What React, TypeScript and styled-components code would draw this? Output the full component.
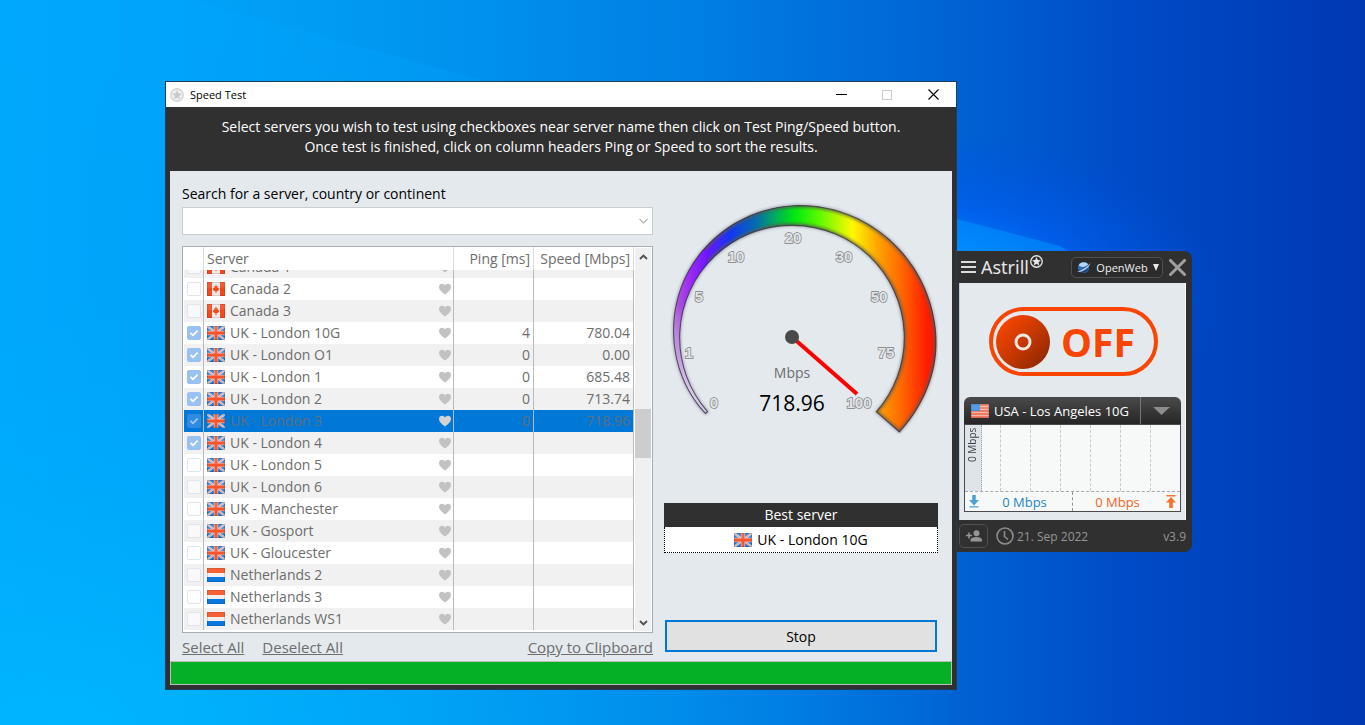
import React, { useLayoutEffect, useRef } from "react";
import styled, { createGlobalStyle, css } from "styled-components";

const GlobalStyle = createGlobalStyle`
  *, *::before, *::after { box-sizing: border-box; }
  body { margin: 0; background: #0078dc; }
  body, button, input, table { font-family: "Open Sans", "Noto Sans", sans-serif; }
  button { padding: 0; border: 0; background: none; color: inherit; cursor: pointer; }
  svg { display: block; flex: none; }
`;

/* ---------- desktop ---------- */

const Desktop = styled.main`
  position: relative;
  display: flex;
  align-items: flex-start;
  min-height: 100vh;
  padding: 81px 173px 35px 165px;
  overflow: hidden;
`;

const WallpaperArt = styled.svg`
  position: absolute;
  inset: 0;
  width: 100%;
  height: 100%;
`;

const Wallpaper = () => (
  <WallpaperArt viewBox="0 0 1365 725" preserveAspectRatio="none" aria-hidden="true">
    <defs>
      <linearGradient id="sky" x1="0" y1="0" x2="1" y2="0">
        <stop offset="0" stopColor="#00a8fc" />
        <stop offset="0.15" stopColor="#00a2f8" />
        <stop offset="0.3" stopColor="#0096f0" />
        <stop offset="0.5" stopColor="#0080e4" />
        <stop offset="0.68" stopColor="#0066d6" />
        <stop offset="0.82" stopColor="#004cc8" />
        <stop offset="1" stopColor="#0038b2" />
      </linearGradient>
      <radialGradient id="glow" gradientUnits="userSpaceOnUse" cx="0" cy="0" r="1" gradientTransform="translate(930 300) scale(290 170)">
        <stop offset="0" stopColor="#009cff" />
        <stop offset="0.3" stopColor="#0084ff" stopOpacity="0.9" />
        <stop offset="0.55" stopColor="#0060f4" stopOpacity="0.7" />
        <stop offset="1" stopColor="#0050dc" stopOpacity="0" />
      </radialGradient>
      <radialGradient id="corner" gradientUnits="userSpaceOnUse" cx="0" cy="0" r="1" gradientTransform="translate(60 725) scale(900 460)">
        <stop offset="0" stopColor="#00b8ff" stopOpacity="0.85" />
        <stop offset="1" stopColor="#00a8f8" stopOpacity="0" />
      </radialGradient>
      <linearGradient id="beam" x1="0" y1="1" x2="0.3" y2="0">
        <stop offset="0" stopColor="#00a8ff" stopOpacity="0" />
        <stop offset="1" stopColor="#00a8ff" stopOpacity="0.25" />
      </linearGradient>
    </defs>
    <rect width="1365" height="725" fill="url(#sky)" />
    <rect width="1365" height="725" fill="url(#corner)" />
    <rect width="1365" height="725" fill="url(#glow)" />
    <path d="M190 0L500 85L0 240V0Z" fill="url(#beam)" />
    <path d="M957 219L1060 246L1070 252H957Z" fill="#0098ff" opacity="0.5" />
  </WallpaperArt>
);

/* ---------- icons ---------- */

const StarBall = ({ size, ring, star, back }: { size: number; ring: string; star: string; back: string }) => (
  <svg width={size} height={size} viewBox="0 0 14 14" aria-hidden="true">
    <circle cx="7" cy="7" r="6.2" fill={back} stroke={ring} strokeWidth="1.4" />
    <path d="M7 2.2L8.4 5.3L11.8 5.6L9.2 7.9L10 11.3L7 9.5L4 11.3L4.8 7.9L2.2 5.6L5.6 5.3Z" fill={star} />
  </svg>
);

const Heart = ({ light }: { light?: boolean }) => (
  <svg width="14" height="12" viewBox="0 0 14 12" aria-hidden="true">
    <path
      d="M7 11.6C5.4 9.9 1 7.4 1 3.9C1 1.9 2.4 0.7 4 0.7C5.3 0.7 6.4 1.4 7 2.5C7.6 1.4 8.7 0.7 10 0.7C11.6 0.7 13 1.9 13 3.9C13 7.4 8.6 9.9 7 11.6Z"
      fill={light ? "#d2d2d2" : "#c2c2c2"}
    />
  </svg>
);

type Country = "ca" | "uk" | "nl" | "us";

const Flag = ({ country }: { country: Country }) => (
  <svg width="18" height="14" viewBox="0 0 18 14" aria-hidden="true">
    {country === "ca" && (
      <>
        <rect width="18" height="14" fill="#ece9e7" />
        <rect width="5" height="14" fill="#f4481f" />
        <rect x="13" width="5" height="14" fill="#f4481f" />
        <path d="M9 2.6L10 4.6L11 4.2L10.8 6L12.4 6.4L11.4 8.6L9.4 9.4V11.2H8.6V9.4L6.6 8.6L5.6 6.4L7.2 6L7 4.2L8 4.6Z" fill="#f4481f" />
      </>
    )}
    {country === "uk" && (
      <>
        <rect width="18" height="14" fill="#1878d2" />
        <path d="M0 0L18 14M18 0L0 14" stroke="#c9d3e0" strokeWidth="2.4" />
        <path d="M0 0L18 14M18 0L0 14" stroke="#f08f80" strokeWidth="0.9" />
        <path d="M9 0V14M0 7H18" stroke="#e3b9b4" strokeWidth="4.4" />
        <path d="M9 0V14M0 7H18" stroke="#f6532c" strokeWidth="2.8" />
      </>
    )}
    {country === "nl" && (
      <>
        <rect width="18" height="14" fill="#f1f0ef" />
        <rect width="18" height="5" fill="#f4501f" />
        <rect y="9" width="18" height="5" fill="#0a78de" />
      </>
    )}
    {country === "us" && (
      <>
        <rect width="18" height="14" fill="#f6b5a6" />
        <path d="M0 1H18M0 4H18M0 7H18M0 10H18M0 13H18" stroke="#ee6650" strokeWidth="1.6" />
        <rect width="9" height="7" fill="#3f93dd" />
      </>
    )}
    <rect x="0.5" y="0.5" width="17" height="13" fill="none" stroke="#000" strokeOpacity="0.12" />
    <path d="M0 0H18V5Q9 7 0 6Z" fill="#fff" opacity="0.1" />
  </svg>
);

/* ---------- speed test window ---------- */

const Window = styled.section`
  position: relative;
  flex: 1;
  min-width: 640px;
  border: 1px solid #1f3c58;
  background: #303030;
`;

const TitleBar = styled.header`
  display: flex;
  align-items: center;
  height: 25px;
  padding-left: 4px;
  background: #fff;
  color: #000;
`;

const WindowTitle = styled.h1`
  flex: 1;
  margin: 0 0 0 6px;
  font-size: 11px;
  line-height: 16px;
  font-weight: 400;
`;

const CaptionButton = styled.button`
  display: grid;
  place-items: center;
  width: 46px;
  height: 25px;
`;

const Notice = styled.p`
  height: 64px;
  margin: 0;
  padding-top: 10px;
  color: #fff;
  font-size: 14px;
  line-height: 20px;
  text-align: center;
`;

const Content = styled.div`
  display: grid;
  grid-template-columns: minmax(0, 1fr) 274px;
  column-gap: 11px;
  margin: 0 4px;
  padding: 13px 14px 4px 12px;
  background: #e4e9ee;
`;

const Column = styled.div`
  display: flex;
  flex-direction: column;
`;

const SearchLabel = styled.label`
  margin-bottom: 3px;
  font-size: 14px;
  line-height: 20px;
  color: #000;
`;

const SearchBox = styled.div`
  display: flex;
  align-items: center;
  height: 28px;
  margin-bottom: 11px;
  border: 1px solid #ccc;
  background: #fff;
`;

const SearchInput = styled.input`
  flex: 1;
  min-width: 0;
  height: 26px;
  padding: 0 4px;
  border: 0;
  outline: 0;
  background: transparent;
  font-size: 14px;
`;

const DropButton = styled.button`
  display: grid;
  place-items: center;
  width: 17px;
  height: 26px;
`;

const ListBox = styled.div`
  display: flex;
  padding: 0 1px;
  border: 1px solid #a9adb2;
  background: #fff;
`;

const ListViewport = styled.div`
  flex: 1;
  min-width: 0;
  height: 385px;
  overflow: hidden;
`;

const ServerTable = styled.table`
  width: 100%;
  margin-bottom: 2px;
  border-collapse: separate;
  border-spacing: 0;
  table-layout: fixed;
  font-size: 14px;
  line-height: 20px;
  color: #6d6d6d;
`;

const HeadCell = styled.th<{ $right?: boolean }>`
  position: sticky;
  top: 0;
  z-index: 1;
  height: 23px;
  padding: 0 3px;
  border-right: 1px solid #dcdcdc;
  background: #fff;
  font-weight: 400;
  white-space: nowrap;
  text-align: ${(p) => (p.$right ? "right" : "left")};
`;

const Row = styled.tr<{ $selected?: boolean }>`
  background: #fff;
  &:nth-child(odd) { background: #f1f1f1; }
  ${(p) =>
    p.$selected &&
    css`
      &&& { background: #0078d7; }
      color: #5f6f7e;
    `}
`;

const Cell = styled.td<{ $right?: boolean }>`
  height: 22px;
  padding: 0 3px;
  border-right: 1px solid #bababa;
  text-align: ${(p) => (p.$right ? "right" : "left")};
`;

const ServerName = styled.div`
  display: flex;
  align-items: center;
  gap: 5px;
  margin-right: -2px;
  height: 22px;
`;

const NameText = styled.span`
  flex: 1;
`;

const CheckWrap = styled.div`
  display: grid;
  width: 14px;
  height: 14px;
  svg { grid-area: 1 / 1; pointer-events: none; }
`;

const CheckInput = styled.input<{ $selected?: boolean }>`
  grid-area: 1 / 1;
  appearance: none;
  width: 14px;
  height: 14px;
  margin: 0;
  border: 1px solid #e2e4ee;
  border-radius: 2px;
  background: rgba(255, 255, 255, 0.6);
  &:checked {
    border-color: ${(p) => (p.$selected ? "#2f8ae0" : "#99c1f1")};
    background: ${(p) => (p.$selected ? "#2f8ae0" : "#99c1f1")};
  }
`;

const ScrollBar = styled.div`
  display: flex;
  flex-direction: column;
  width: 16px;
  margin: 1px 0 1px 1px;
  background: #f0f0f0;
`;

const ScrollButton = styled.button`
  display: grid;
  place-items: center;
  height: 17px;
`;

const Track = styled.div`
  flex: 1;
  display: flex;
  flex-direction: column;
`;

const TrackSpace = styled.div<{ $grow: number }>`
  flex: ${(p) => p.$grow} 1 0;
`;

const Thumb = styled.div`
  height: 49px;
  background: #cdcdcd;
`;

const LinkRow = styled.nav`
  display: flex;
  gap: 18px;
  margin-top: 4px;
  font-size: 15px;
  line-height: 20px;
`;

const TextLink = styled.a<{ $end?: boolean }>`
  color: #6d6d6d;
  text-decoration: underline;
  margin-left: ${(p) => (p.$end ? "auto" : "0")};
`;

const Gauge = styled.div`
  margin: 11px 0 58px;
`;

const BestServer = styled.section`
  margin-bottom: 67px;
  font-size: 14px;
  text-align: center;
`;

const BestTitle = styled.h2`
  margin: 0;
  background: #303030;
  color: #fff;
  font-size: 14px;
  font-weight: 400;
  line-height: 24px;
`;

const BestName = styled.div`
  display: flex;
  align-items: center;
  justify-content: center;
  gap: 5px;
  height: 26px;
  border: 1px dotted #000;
  border-top: 0;
  background: #fff;
  color: #000;
`;

const StopButton = styled.button`
  height: 32px;
  margin: 0 1px;
  border: 2px solid #0078d7;
  background: #e1e1e1;
  color: #000;
  font-size: 14px;
`;

const Progress = styled.progress`
  appearance: none;
  display: block;
  width: calc(100% - 8px);
  height: 24px;
  margin: 0 4px 4px;
  border: 1px solid #bcbcbc;
  background: #e6e6e6;
  &::-webkit-progress-bar { background: #e6e6e6; }
  &::-webkit-progress-value { background: #06b025; }
`;

/* Outer edge of the dial: [share of the sweep, radius]. */
const OUTER: [number, number][] = [
  [0, 114.5], [0.15, 118.5], [0.32, 125.8], [0.5, 133.2], [0.66, 138.4], [0.8, 142.4], [0.88, 143.8], [1, 141.6],
];
const CX = 128.5;
const CY = 144;

const polar = (share: number, radius: number): string => {
  const a = ((139.5 + share * 261.5) * Math.PI) / 180;
  return `${CX + radius * Math.cos(a)} ${CY + radius * Math.sin(a)}`;
};

const slopeAt = (i: number): number => {
  const a = OUTER[Math.max(i - 1, 0)];
  const b = OUTER[Math.min(i + 1, OUTER.length - 1)];
  return (b[1] - a[1]) / (b[0] - a[0]);
};

const outerRadius = (share: number): number => {
  let i = 0;
  while (i < OUTER.length - 2 && share > OUTER[i + 1][0]) i++;
  const [s0, r0] = OUTER[i];
  const [s1, r1] = OUTER[i + 1];
  const h = s1 - s0;
  const t = (share - s0) / h;
  const t2 = t * t;
  const t3 = t2 * t;
  return (
    (2 * t3 - 3 * t2 + 1) * r0 +
    (t3 - 2 * t2 + t) * h * slopeAt(i) +
    (3 * t2 - 2 * t3) * r1 +
    (t3 - t2) * h * slopeAt(i + 1)
  );
};

const dialPath = (() => {
  const steps = 120;
  const edge = Array.from({ length: steps + 1 }, (_, n) => polar(n / steps, outerRadius(n / steps)));
  return `M${edge.join("L")}L${polar(1, 111)}A112.3 112.3 0 1 0 ${polar(0, 111.8)}Z`;
})();

const TICKS: [string, number, number][] = [
  ["0", 50, 213], ["1", 25, 163], ["5", 35, 107], ["10", 72, 67], ["20", 129, 48],
  ["30", 180, 67], ["50", 215, 107], ["75", 222, 163], ["100", 195, 213],
];

const SpeedGauge = () => (
  <Gauge>
    <svg width="274" height="250" viewBox="0 0 274 250" role="img" aria-label="Speed gauge">
      <defs>
        <linearGradient id="spectrum" gradientUnits="userSpaceOnUse" x1="9" y1="0" x2="273" y2="0">
          <stop offset="0" stopColor="#b06cd0" />
          <stop offset="0.025" stopColor="#a84ce0" />
          <stop offset="0.06" stopColor="#a02cf4" />
          <stop offset="0.13" stopColor="#6a16ff" />
          <stop offset="0.22" stopColor="#1038f0" />
          <stop offset="0.32" stopColor="#0470a8" />
          <stop offset="0.4" stopColor="#00b850" />
          <stop offset="0.46" stopColor="#00e810" />
          <stop offset="0.55" stopColor="#58fa00" />
          <stop offset="0.68" stopColor="#fff800" />
          <stop offset="0.78" stopColor="#ffa000" />
          <stop offset="0.87" stopColor="#ff6400" />
          <stop offset="0.96" stopColor="#ff1e00" />
          <stop offset="1" stopColor="#ff1400" />
        </linearGradient>
        <linearGradient id="fade" gradientUnits="userSpaceOnUse" x1="0" y1="110" x2="0" y2="195">
          <stop offset="0" stopColor="#dcdfe4" stopOpacity="0" />
          <stop offset="1" stopColor="#dcdfe4" stopOpacity="0.9" />
        </linearGradient>
        <filter id="soft" x="-10%" y="-10%" width="120%" height="120%">
          <feGaussianBlur stdDeviation="1.5" />
        </filter>
        <clipPath id="dial"><path d={dialPath} /></clipPath>
        <clipPath id="wide"><path d="M30 0H274V250H200V144H60Z" /></clipPath>
        <clipPath id="tail"><rect x="0" y="90" width="80" height="140" /></clipPath>
      </defs>
      <path d={dialPath} fill="none" stroke="#8d949a" strokeWidth="2" filter="url(#soft)" />
      <path d={dialPath} fill="url(#spectrum)" />
      <g clipPath="url(#tail)"><path d={dialPath} fill="url(#fade)" /></g>
      <g clipPath="url(#wide)">
        <g clipPath="url(#dial)">
          <path d={dialPath} fill="none" stroke="#5c5c50" strokeWidth="4" filter="url(#soft)" opacity="0.8" />
        </g>
      </g>
      <path d={dialPath} fill="none" stroke="#2e2238" strokeOpacity="0.7" strokeWidth="1.1" />
      {TICKS.map(([label, x, y]) => (
        <text
          key={label}
          x={x}
          y={y}
          textAnchor="middle"
          fontFamily="Liberation Sans, sans-serif"
          fontSize="15"
          fontWeight="700"
          fill="#e2e5e8"
          stroke="#7c7e80"
          strokeWidth="1.4"
          paintOrder="stroke"
        >
          {label}
        </text>
      ))}
      <path d="M128 142L193 199" stroke="#ff0000" strokeWidth="4" />
      <circle cx="128" cy="142" r="7" fill="#4a4a4a" />
      <text x="128" y="183" textAnchor="middle" fontFamily="Open Sans, sans-serif" fontSize="14" fill="#6d6d6d">Mbps</text>
      <text x="128" y="216" textAnchor="middle" fontFamily="Open Sans, sans-serif" fontSize="21" fill="#000">718.96</text>
    </svg>
  </Gauge>
);

type Server = { name: string; country: Country; checked?: boolean; ping?: string; speed?: string; selected?: boolean };

const SERVERS: Server[] = [
  { name: "Canada 1", country: "ca" },
  { name: "Canada 2", country: "ca" },
  { name: "Canada 3", country: "ca" },
  { name: "UK - London 10G", country: "uk", checked: true, ping: "4", speed: "780.04" },
  { name: "UK - London O1", country: "uk", checked: true, ping: "0", speed: "0.00" },
  { name: "UK - London 1", country: "uk", checked: true, ping: "0", speed: "685.48" },
  { name: "UK - London 2", country: "uk", checked: true, ping: "0", speed: "713.74" },
  { name: "UK - London 3", country: "uk", checked: true, ping: "0", speed: "718.96", selected: true },
  { name: "UK - London 4", country: "uk", checked: true },
  { name: "UK - London 5", country: "uk" },
  { name: "UK - London 6", country: "uk" },
  { name: "UK - Manchester", country: "uk" },
  { name: "UK - Gosport", country: "uk" },
  { name: "UK - Gloucester", country: "uk" },
  { name: "Netherlands 2", country: "nl" },
  { name: "Netherlands 3", country: "nl" },
  { name: "Netherlands WS1", country: "nl" },
];

const ServerList = () => {
  const viewport = useRef<HTMLDivElement>(null);
  useLayoutEffect(() => {
    if (viewport.current) viewport.current.scrollTop = 14;
  }, []);
  return (
    <ListBox>
      <ListViewport ref={viewport}>
        <ServerTable>
          <colgroup>
            <col style={{ width: 20 }} />
            <col />
            <col style={{ width: 80 }} />
            <col style={{ width: 100 }} />
          </colgroup>
          <thead>
            <tr>
              <HeadCell aria-label="Selected" />
              <HeadCell>Server</HeadCell>
              <HeadCell $right>Ping [ms]</HeadCell>
              <HeadCell $right>Speed [Mbps]</HeadCell>
            </tr>
          </thead>
          <tbody>
            {SERVERS.map((s) => (
              <Row key={s.name} $selected={s.selected}>
                <Cell>
                  <CheckWrap>
                    <CheckInput type="checkbox" defaultChecked={s.checked} $selected={s.selected} aria-label={s.name} />
                    {s.checked && (
                      <svg width="14" height="14" viewBox="0 0 14 14" aria-hidden="true">
                        <path d="M3.5 6.8L6 9.3L10.6 4.7" fill="none" stroke={s.selected ? "#9ccaf2" : "#fff"} strokeWidth="1.8" />
                      </svg>
                    )}
                  </CheckWrap>
                </Cell>
                <Cell>
                  <ServerName>
                    <Flag country={s.country} />
                    <NameText>{s.name}</NameText>
                    <Heart light={s.selected} />
                  </ServerName>
                </Cell>
                <Cell $right>{s.ping}</Cell>
                <Cell $right>{s.speed}</Cell>
              </Row>
            ))}
          </tbody>
        </ServerTable>
      </ListViewport>
      <ScrollBar>
        <ScrollButton aria-label="Scroll up">
          <svg width="9" height="6" viewBox="0 0 9 6"><path d="M1 5L4.5 1.5L8 5" fill="none" stroke="#505050" strokeWidth="1.8" /></svg>
        </ScrollButton>
        <Track>
          <TrackSpace $grow={144} />
          <Thumb />
          <TrackSpace $grow={156} />
        </Track>
        <ScrollButton aria-label="Scroll down">
          <svg width="9" height="6" viewBox="0 0 9 6"><path d="M1 1L4.5 4.5L8 1" fill="none" stroke="#505050" strokeWidth="1.8" /></svg>
        </ScrollButton>
      </ScrollBar>
    </ListBox>
  );
};

const SpeedTestWindow = () => (
  <Window>
    <TitleBar>
      <StarBall size={14} ring="#d4d4d4" star="#c9c9c9" back="#efefef" />
      <WindowTitle>Speed Test</WindowTitle>
      <CaptionButton aria-label="Minimize">
        <svg width="11" height="11" viewBox="0 0 11 11"><path d="M0 5.5H11" stroke="#000" /></svg>
      </CaptionButton>
      <CaptionButton aria-label="Maximize" disabled>
        <svg width="10" height="10" viewBox="0 0 10 10"><rect x="0.5" y="0.5" width="9" height="9" fill="none" stroke="#ccc" /></svg>
      </CaptionButton>
      <CaptionButton aria-label="Close">
        <svg width="11" height="11" viewBox="0 0 11 11"><path d="M0.5 0.5L10.5 10.5M10.5 0.5L0.5 10.5" stroke="#000" strokeWidth="1.1" /></svg>
      </CaptionButton>
    </TitleBar>
    <Notice>
      Select servers you wish to test using checkboxes near server name then click on Test Ping/Speed button.
      <br />
      Once test is finished, click on column headers Ping or Speed to sort the results.
    </Notice>
    <Content>
      <Column>
        <SearchLabel htmlFor="search">Search for a server, country or continent</SearchLabel>
        <SearchBox>
          <SearchInput id="search" type="text" />
          <DropButton aria-label="Show servers">
            <svg width="9" height="6" viewBox="0 0 9 6"><path d="M0.5 0.8L4.5 4.8L8.5 0.8" fill="none" stroke="#b0b0b0" strokeWidth="1.2" /></svg>
          </DropButton>
        </SearchBox>
        <ServerList />
        <LinkRow>
          <TextLink href="#select">Select All</TextLink>
          <TextLink href="#deselect">Deselect All</TextLink>
          <TextLink href="#copy" $end>Copy to Clipboard</TextLink>
        </LinkRow>
      </Column>
      <Column>
        <SpeedGauge />
        <BestServer>
          <BestTitle>Best server</BestTitle>
          <BestName>
            <Flag country="uk" />
            UK - London 10G
          </BestName>
        </BestServer>
        <StopButton>Stop</StopButton>
      </Column>
    </Content>
    <Progress max={100} value={100} aria-label="Test progress" />
  </Window>
);

/* ---------- client widget ---------- */

const Widget = styled.aside`
  position: relative;
  flex: none;
  width: 235px;
  margin-top: 170px;
  padding: 0 6px 0 2px;
  border-radius: 0 8px 8px 0;
  background: #303030;
`;

const WidgetHeader = styled.header`
  display: flex;
  align-items: center;
  height: 32px;
  padding-left: 2px;
`;

const IconButton = styled.button`
  display: grid;
  place-items: center;
`;

const Brand = styled.div`
  display: flex;
  flex: 1;
  margin-left: 5px;
  gap: 1px;
  color: #e6e6e6;
  font-family: "Noto Sans", sans-serif;
  font-size: 18px;
  line-height: 24px;
`;

const ModeButton = styled.button`
  display: flex;
  align-items: center;
  justify-content: space-between;
  width: 92px;
  height: 21px;
  margin-right: 6px;
  padding: 0 3px 0 4px;
  border: 1px solid #505050;
  border-radius: 5px;
  background: #2b2b2b;
  color: #f0f0f0;
  font-size: 11px;
`;

const WidgetBody = styled.div`
  height: 237px;
  padding: 24px 4px 8px;
  background: #e4e9ee;
  border-right: 1px solid #fff;
  border-left: 1px solid #c8ccd0;
`;

const Toggle = styled.button`
  display: flex;
  align-items: center;
  width: 169px;
  height: 69px;
  margin: 0 auto 21px 25px;
  padding-left: 3px;
  gap: 11px;
  border: 4px solid #fa4500;
  border-radius: 35px;
  color: #fa4500;
  font-size: 39px;
  line-height: 48px;
  font-weight: 700;
`;

const ServerBar = styled.div`
  display: flex;
  height: 27px;
  border-radius: 6px 6px 0 0;
  background: linear-gradient(#4a4a4a, #262626);
  color: #fff;
`;

const ServerButton = styled.button`
  display: flex;
  flex: 1;
  align-items: center;
  gap: 5px;
  padding-left: 7px;
  font-size: 13px;
  white-space: nowrap;
`;

const ServerMenuButton = styled.button`
  display: grid;
  place-items: center;
  width: 41px;
  border-left: 1px solid #777;
`;

const Traffic = styled.div`
  border: 1px solid #4a4a4e;
  background: #f7f9f9;
`;

const Plot = styled.div`
  display: flex;
  height: 67px;
  border-bottom: 1px dashed #a4a8ac;
`;

const Axis = styled.div`
  width: 17px;
  padding: 3px 2px 3px 0;
  border-right: 1px dotted #a0a4a8;
  background: #dfe4ea;
  color: #3c4048;
  font-size: 10px;
  line-height: 14px;
  text-align: right;
  writing-mode: vertical-rl;
`;

const AxisText = styled.span`
  display: block;
  height: 100%;
  transform: rotate(180deg);
`;

const GridLines = styled.div`
  display: grid;
  flex: 1;
  padding-left: 18px;
  grid-template-columns: repeat(6, 30px);
`;

const GridLine = styled.div`
  border-left: 1px dashed #c8c8c8;
`;

const Rates = styled.div`
  display: flex;
  height: 19px;
`;

const Rate = styled.div<{ $up?: boolean }>`
  display: flex;
  flex: 1;
  align-items: center;
  flex-direction: ${(p) => (p.$up ? "row-reverse" : "row")};
  gap: ${(p) => (p.$up ? "6px" : "0")};
  padding: 0 3px;
  border-left: ${(p) => (p.$up ? "1px dashed #909498" : "0")};
  color: ${(p) => (p.$up ? "#f26522" : "#1b86c4")};
  font-size: 13px;
  line-height: 18px;
`;

const RateText = styled.span`
  flex: 1;
  text-align: center;
`;

const WidgetFooter = styled.footer`
  display: flex;
  align-items: center;
  height: 32px;
  color: #959595;
  font-size: 12px;
`;

const AddUserButton = styled.button`
  display: grid;
  place-items: center;
  width: 29px;
  height: 24px;
  margin-right: 8px;
  border: 1px solid #505050;
  border-radius: 5px;
`;

const DateText = styled.time`
  flex: 1;
  margin-left: 3px;
`;

const AstrillWidget = () => (
  <Widget>
    <WidgetHeader>
      <IconButton aria-label="Menu">
        <svg width="15" height="14" viewBox="0 0 15 14"><path d="M0 2H15M0 7H15M0 12H15" stroke="#dcdcdc" strokeWidth="2" /></svg>
      </IconButton>
      <Brand>
        Astrill
        <StarBall size={13} ring="#e6e6e6" star="#e6e6e6" back="#303030" />
      </Brand>
      <ModeButton>
        <svg width="15" height="13" viewBox="0 0 15 13" aria-hidden="true">
          <circle cx="7.5" cy="6.5" r="5.6" fill="#2c6db4" />
          <path d="M2.6 4.6C4.4 0.6 10 0.2 12.2 3.6C9 6.4 5.6 6.8 2.6 4.6Z" fill="#b4d8f4" />
          <path d="M0.6 10.8C5 10.2 11.6 6.2 14.4 2C14.2 5.6 6.6 12 0.6 10.8Z" fill="#c9d4e2" />
          <path d="M4 11.4C7 10.8 10.6 8.8 12.6 6.8C12 9.8 8.4 13 4 11.4Z" fill="#173c68" />
        </svg>
        OpenWeb
        <svg width="6" height="7" viewBox="0 0 6 7" aria-hidden="true"><path d="M0 0H6L3 7Z" fill="#e8e8e8" /></svg>
      </ModeButton>
      <IconButton aria-label="Close client">
        <svg width="17" height="17" viewBox="0 0 17 17"><path d="M1.5 1.5L15.5 15.5M15.5 1.5L1.5 15.5" stroke="#a0a0a0" strokeWidth="3" strokeLinecap="round" /></svg>
      </IconButton>
    </WidgetHeader>
    <WidgetBody>
      <Toggle>
        <svg width="54" height="54" viewBox="0 0 54 54" aria-hidden="true">
          <defs>
            <linearGradient id="knob" x1="0.15" y1="0.15" x2="0.85" y2="0.85">
              <stop offset="0" stopColor="#f44400" />
              <stop offset="0.5" stopColor="#c83800" />
              <stop offset="1" stopColor="#962a00" />
            </linearGradient>
          </defs>
          <circle cx="27" cy="27" r="27" fill="url(#knob)" />
          <circle cx="27" cy="27" r="7" fill="none" stroke="#f0e6e2" strokeWidth="3" />
        </svg>
        OFF
      </Toggle>
      <ServerBar>
        <ServerButton>
          <Flag country="us" />
          USA - Los Angeles 10G
        </ServerButton>
        <ServerMenuButton aria-label="Choose server">
          <svg width="17" height="8" viewBox="0 0 17 8"><path d="M0 0H17L8.5 8Z" fill="#8c8c8c" /></svg>
        </ServerMenuButton>
      </ServerBar>
      <Traffic>
        <Plot>
          <Axis><AxisText>0 Mbps</AxisText></Axis>
          <GridLines>
            {[1, 2, 3, 4, 5, 6].map((n) => <GridLine key={n} />)}
          </GridLines>
        </Plot>
        <Rates>
          <Rate>
            <svg width="12" height="13" viewBox="0 0 12 13" aria-hidden="true"><path d="M4.2 0H7.8V5H11L6 10.6L1 5H4.2ZM1.5 11.2H10.5V12.6H1.5Z" fill="#4ba3d3" /></svg>
            <RateText>0 Mbps</RateText>
          </Rate>
          <Rate $up>
            <svg width="12" height="13" viewBox="0 0 12 13" aria-hidden="true"><path d="M1.5 0H10.5V1.4H1.5ZM6 2L11 7.6H7.8V13H4.2V7.6H1Z" fill="#fa7030" /></svg>
            <RateText>0 Mbps</RateText>
          </Rate>
        </Rates>
      </Traffic>
    </WidgetBody>
    <WidgetFooter>
      <AddUserButton aria-label="Add user">
        <svg width="16" height="12" viewBox="0 0 16 12">
          <circle cx="10.5" cy="3.2" r="3" fill="#959595" />
          <path d="M4.5 11.5V10C4.5 8 7.5 7 10.5 7C13.5 7 16 8 16 10V11.5Z" fill="#959595" />
          <path d="M3 2.5V8.5M0 5.5H6" stroke="#959595" strokeWidth="1.5" />
        </svg>
      </AddUserButton>
      <svg width="18" height="18" viewBox="0 0 18 18" aria-hidden="true">
        <circle cx="9" cy="9" r="8" fill="none" stroke="#8c8c8c" strokeWidth="1.6" />
        <path d="M8.5 4V9.5L12 12.5" fill="none" stroke="#8c8c8c" strokeWidth="1.6" />
      </svg>
      <DateText dateTime="2022-09-21">21. Sep 2022</DateText>
      v3.9
    </WidgetFooter>
  </Widget>
);

export default function App() {
  return (
    <>
      <GlobalStyle />
      <Desktop>
        <Wallpaper />
        <SpeedTestWindow />
        <AstrillWidget />
      </Desktop>
    </>
  );
}
